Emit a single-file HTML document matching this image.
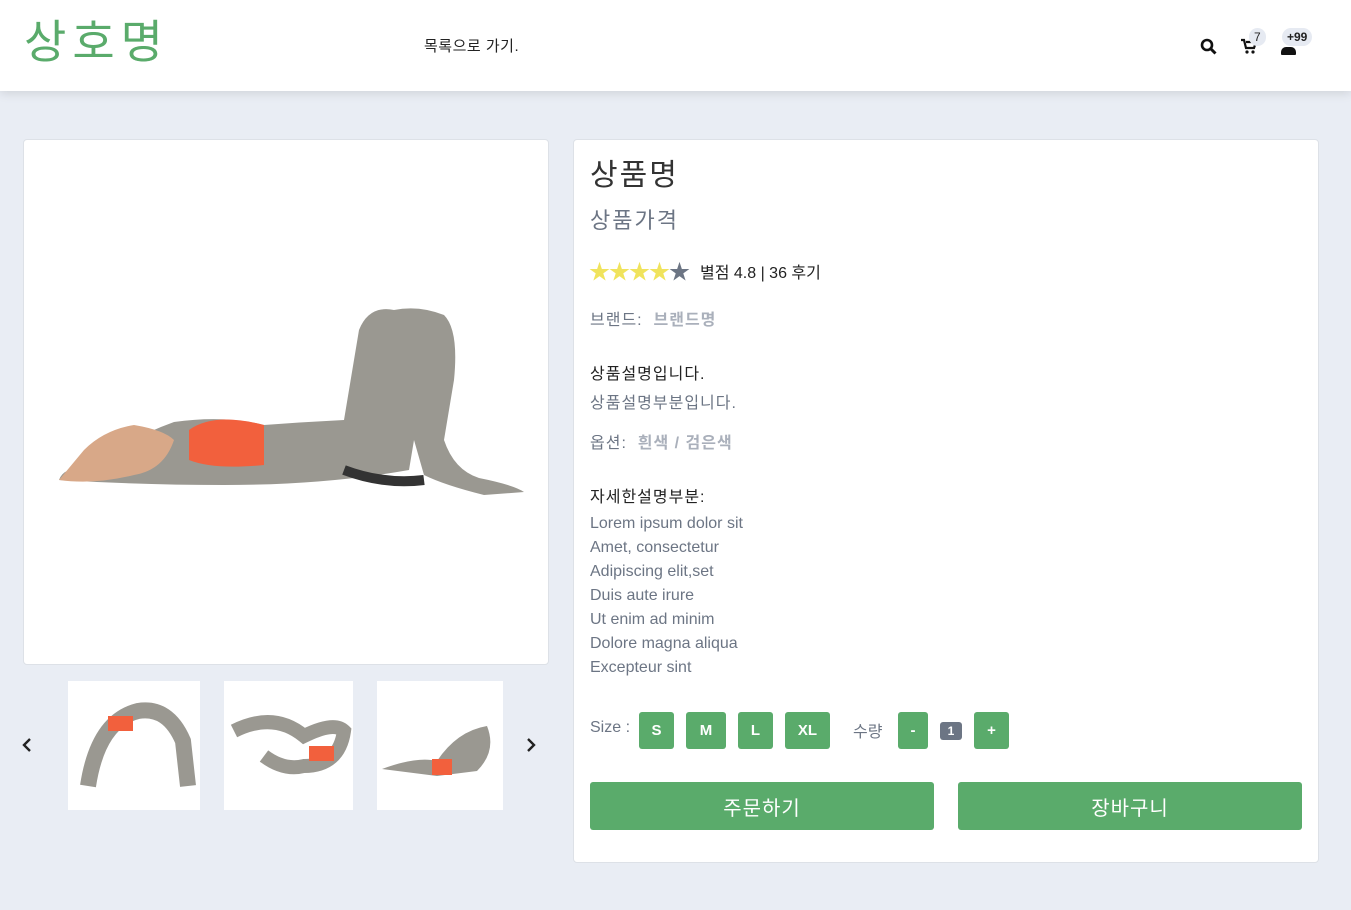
<!DOCTYPE html>
<html><head><meta charset="utf-8"><style>
*{box-sizing:border-box;margin:0;padding:0}
body{width:1351px;height:910px;background:#e9edf4;font-family:"Liberation Sans","Noto Sans CJK KR",sans-serif;position:relative;overflow:hidden}
.hdr{position:absolute;left:0;top:0;width:1351px;height:91px;background:#fff;box-shadow:0 2px 10px rgba(0,0,0,.12)}
.logo{position:absolute;left:24px;top:6px;font-size:46px;color:#5aab6b;letter-spacing:6px}
.nav{position:absolute;left:424px;top:35px;font-size:15px;color:#222;letter-spacing:.5px}
.badge{position:absolute;background:#e6eaf2;border-radius:9px;font-size:11px;color:#222;padding:2px 5px}
.card{position:absolute;background:#fff;border:1px solid #dde1e7;border-radius:4px}
.t{position:absolute;white-space:nowrap}
.g{color:#6c7584}
.btn{position:absolute;top:712px;height:37px;background:#5aab6b;color:#fff;border-radius:3px;font-size:15px;font-weight:bold;display:flex;align-items:center;justify-content:center}
.big{position:absolute;top:782px;width:344px;height:48px;background:#5aab6b;color:#fff;border-radius:3px;font-size:20px;display:flex;align-items:center;justify-content:center}
.thumb{position:absolute;top:681px;height:129px;background:#fff}
</style></head><body>
<div class="hdr">
<div class="logo">상호명</div>
<div class="nav">목록으로 가기.</div>
<svg style="position:absolute;left:1200px;top:38px" width="17" height="17" viewBox="0 0 17 17"><circle cx="7" cy="7" r="5" fill="none" stroke="#111" stroke-width="2.6"/><path d="M11 11l4.5 4.5" stroke="#111" stroke-width="3"/></svg>
<svg style="position:absolute;left:1240px;top:38px" width="17" height="16" viewBox="0 0 17 16"><path d="M1 2h3l2 8h8l2-6H6" fill="none" stroke="#111" stroke-width="2.2"/><circle cx="7" cy="14" r="1.6" fill="#111"/><circle cx="13" cy="14" r="1.6" fill="#111"/></svg>
<div class="badge" style="left:1249px;top:28px;font-size:12px">7</div>
<div style="position:absolute;left:1281px;top:47px;width:15px;height:8px;background:#111;border-radius:5px 5px 1px 1px"></div>
<div class="badge" style="left:1282px;top:28px;font-size:12px;font-weight:bold">+99</div>
</div>

<div class="card" style="left:23px;top:139px;width:526px;height:526px">
<svg width="524" height="524" viewBox="0 0 524 524">
<path d="M35 340 Q40 325 70 328 Q100 300 150 282 Q200 275 240 285 Q280 282 320 280 L335 190 Q345 165 370 170 Q395 165 420 175 Q435 190 430 240 L420 300 Q430 330 455 338 Q490 345 500 352 L460 355 Q420 345 400 335 L390 300 L385 330 Q300 345 200 345 Q120 345 35 340Z" fill="#9a9891"/>
<path d="M165 290 Q190 272 240 285 L240 325 Q190 330 165 320Z" fill="#f2603d"/>
<path d="M60 310 Q80 290 110 285 Q140 290 150 300 Q140 330 110 335 Q70 345 35 340Z" fill="#d8a888"/>
<path d="M320 330 Q360 345 400 340" stroke="#333" stroke-width="10" fill="none"/>
</svg></div>

<svg style="position:absolute;left:21px;top:737px" width="12" height="16"><path d="M9 2L3 8l6 6" fill="none" stroke="#222" stroke-width="2.4"/></svg>
<svg style="position:absolute;left:525px;top:737px" width="12" height="16"><path d="M3 2l6 6-6 6" fill="none" stroke="#222" stroke-width="2.4"/></svg>
<div class="thumb" style="left:68px;width:132px"><svg width="132" height="129"><path d="M20 105 Q30 40 70 30 Q100 25 115 60 L120 105" fill="none" stroke="#9a9891" stroke-width="16"/><rect x="40" y="35" width="25" height="15" fill="#f2603d"/></svg></div>
<div class="thumb" style="left:224px;width:129px"><svg width="129" height="129"><path d="M10 50 Q50 30 80 55 Q110 40 120 50 Q115 85 80 85 Q60 90 40 75" fill="none" stroke="#9a9891" stroke-width="14"/><rect x="85" y="65" width="25" height="15" fill="#f2603d"/></svg></div>
<div class="thumb" style="left:377px;width:126px"><svg width="126" height="129"><path d="M5 88 Q40 75 60 80 Q80 50 110 45 Q120 70 100 90 L60 95Z" fill="#9a9891"/><rect x="55" y="78" width="20" height="16" fill="#f2603d"/></svg></div>

<div class="card" style="left:573px;top:139px;width:746px;height:724px"></div>
<div class="t" style="left:590px;top:150px;font-size:30px;color:#333;letter-spacing:2px">상품명</div>
<div class="t g" style="left:590px;top:203px;font-size:22px;letter-spacing:2px">상품가격</div>
<div class="t" style="left:589px;top:256px;font-size:21px;letter-spacing:-1px"><span style="color:#f0e35c">★★★★</span><span style="color:#6c7584">★</span></div>
<div class="t" style="left:700px;top:259px;font-size:16px;color:#222">별점 4.8 | 36 후기</div>
<div class="t g" style="left:590px;top:306px;font-size:16px;letter-spacing:1px">브랜드:&nbsp;&nbsp;<span style="color:#aab0bb;font-weight:bold">브랜드명</span></div>
<div class="t" style="left:590px;top:360px;font-size:16px;color:#222;letter-spacing:1px">상품설명입니다.</div>
<div class="t g" style="left:590px;top:389px;font-size:16px;letter-spacing:1px">상품설명부분입니다.</div>
<div class="t g" style="left:590px;top:429px;font-size:16px;letter-spacing:1px">옵션:&nbsp;&nbsp;<span style="color:#aab0bb;font-weight:bold">흰색 / 검은색</span></div>
<div class="t" style="left:590px;top:483px;font-size:16px;color:#222;letter-spacing:1px">자세한설명부분:</div>
<div class="t g" style="left:590px;top:512px;font-size:16px;line-height:24px">Lorem ipsum dolor sit<br>Amet, consectetur<br>Adipiscing elit,set<br>Duis aute irure<br>Ut enim ad minim<br>Dolore magna aliqua<br>Excepteur sint</div>
<div class="t g" style="left:590px;top:719px;font-size:16px">Size :</div>
<div class="btn" style="left:639px;width:35px">S</div>
<div class="btn" style="left:686px;width:40px">M</div>
<div class="btn" style="left:738px;width:35px">L</div>
<div class="btn" style="left:785px;width:45px">XL</div>
<div class="t g" style="left:853px;top:718px;font-size:16px">수량</div>
<div class="btn" style="left:898px;width:30px">-</div>
<div style="position:absolute;left:940px;top:722px;width:22px;height:18px;background:#6c7584;color:#fff;border-radius:3px;font-size:12px;font-weight:bold;text-align:center;line-height:18px">1</div>
<div class="btn" style="left:974px;width:35px">+</div>
<div class="big" style="left:590px;letter-spacing:1px">주문하기</div>
<div class="big" style="left:958px;letter-spacing:1px">장바구니</div>
</body></html>
